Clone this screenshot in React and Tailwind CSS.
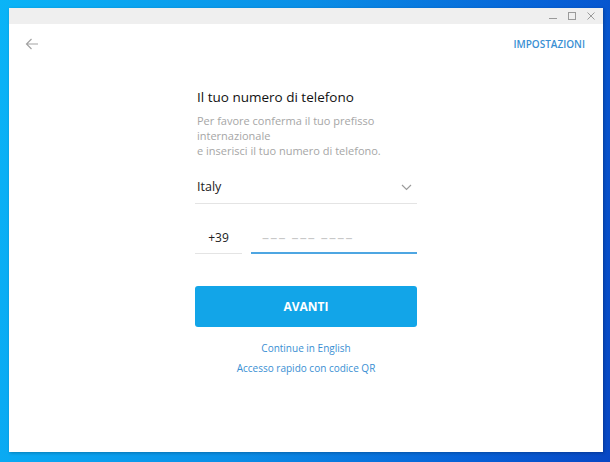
import React from "react";

const font = { fontFamily: '"Open Sans", "Liberation Sans", sans-serif' };

const WindowControls = () => (
  <div className="flex items-center gap-[9px] pr-[7px] text-[#9a9a9a]">
    {/* minimize */}
    <svg width="10" height="10" viewBox="0 0 10 10">
      <path d="M1 7.5h8" stroke="currentColor" strokeWidth="1" />
    </svg>
    {/* maximize */}
    <svg width="10" height="10" viewBox="0 0 10 10">
      <rect x="1.5" y="1.5" width="7" height="7" fill="none" stroke="currentColor" strokeWidth="1" />
    </svg>
    {/* close */}
    <svg width="10" height="10" viewBox="0 0 10 10">
      <path d="M1.5 1.5l7 7M8.5 1.5l-7 7" stroke="currentColor" strokeWidth="1" />
    </svg>
  </div>
);

export default function App() {
  return (
    <div
      className="w-[610px] h-[462px] overflow-hidden bg-[linear-gradient(100deg,#0ab4f7_0%,#0a8ee6_45%,#0660d6_80%,#0847c4_100%)] pl-[9px] pt-[8px]"
      style={font}
    >
      <div className="w-[594px] h-[444px] bg-white flex flex-col shadow-[1px_1px_3px_rgba(0,0,0,0.25)]">
        {/* Title bar */}
        <div className="h-4 bg-[#efefef] flex items-center justify-end">
          <WindowControls />
        </div>

        {/* Header */}
        <div className="h-10 flex items-center justify-between pl-[16px] pr-[18px]">
          <svg width="14" height="12" viewBox="0 0 14 12" className="text-[#a3a3a3]">
            <path d="M13 6H1.5M6.5 1L1.5 6l5 5" fill="none" stroke="currentColor" strokeWidth="1.2" />
          </svg>
          <span className="text-[10px] font-semibold text-[#3a8fd3]">IMPOSTAZIONI</span>
        </div>

        {/* Form column */}
        <div className="w-[222px] mx-auto flex flex-col mt-[24px]">
          <h1 className="text-[13.5px] leading-[18px] font-normal text-[#111] pl-[2px]">
            Il tuo numero di telefono
          </h1>
          <p className="mt-[7px] text-[11px] leading-[15px] text-[#a6a6a6] pl-[2px]">
            Per favore conferma il tuo prefisso
            <br />
            internazionale
            <br />
            e inserisci il tuo numero di telefono.
          </p>

          {/* Country */}
          <div className="mt-[14px] h-[32px] flex items-center justify-between border-b border-[#e4e4e4] pl-[2px] pr-[5px]">
            <span className="text-[12.5px] text-[#222]">Italy</span>
            <svg width="11" height="7" viewBox="0 0 11 7" className="text-[#9c9c9c]">
              <path d="M1 1l4.5 4.5L10 1" fill="none" stroke="currentColor" strokeWidth="1.2" />
            </svg>
          </div>

          {/* Phone */}
          <div className="mt-[18px] flex gap-[9px] items-end">
            <div className="w-[47px] h-[32px] flex items-center justify-center border-b border-[#e4e4e4]">
              <span className="text-[12px] text-[#222]">+39</span>
            </div>
            <div className="flex-1 h-[32px] flex items-center border-b-2 border-[#4ea6e2] pl-[11px]">
              <span className="text-[14px] text-[#c8c8c8] tracking-[1.2px]">––– ––– ––––</span>
            </div>
          </div>

          {/* Button */}
          <button className="mt-[32px] h-[41px] rounded-[3px] bg-[#12a5e8] text-white text-[12px] font-bold">
            AVANTI
          </button>

          <div className="mt-[13px] flex flex-col items-center gap-[4px] text-[10px] leading-[16px] text-[#3a8fd3]">
            <span>Continue in English</span>
            <span>Accesso rapido con codice QR</span>
          </div>
        </div>
      </div>
    </div>
  );
}
